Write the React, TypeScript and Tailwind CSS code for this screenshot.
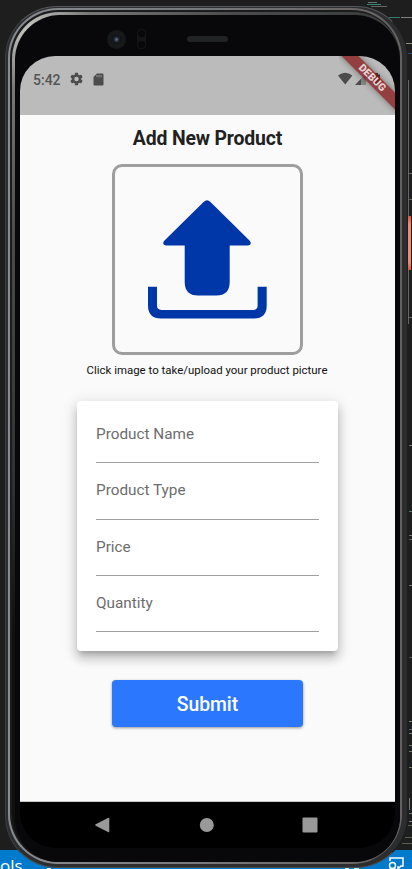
import React from "react";

const fields = ["Product Name", "Product Type", "Price", "Quantity"];

const codeMarks = [
  { top: 2, left: 368, width: 9, color: "#6f8f88" },
  { top: 4, left: 367, width: 14, color: "#3f9c86" },
  { top: 6, left: 371, width: 16, color: "#777777" },
  { top: 17, left: 389, width: 11, color: "#369682" },
  { top: 17, left: 401, width: 11, color: "#999999" },
  { top: 43, left: 404, width: 8, color: "#aaa88a" },
  { top: 53, left: 407, width: 5, color: "#295a8c" },
  { top: 173, left: 408, width: 4, color: "#777777" },
  { top: 199, left: 408, width: 4, color: "#77796a" },
  { top: 317, left: 408, width: 4, color: "#777777" },
  { top: 445, left: 409, width: 3, color: "#888888" },
  { top: 511, left: 409, width: 3, color: "#71877c" },
  { top: 535, left: 409, width: 3, color: "#888888" },
  { top: 539, left: 409, width: 3, color: "#777777" },
  { top: 585, left: 409, width: 3, color: "#888888" },
  { top: 657, left: 409, width: 3, color: "#66605c" },
  { top: 721, left: 409, width: 3, color: "#88917c" },
  { top: 729, left: 409, width: 3, color: "#777777" },
  { top: 733, left: 409, width: 3, color: "#88917c" },
  { top: 745, left: 409, width: 3, color: "#88917c" },
  { top: 751, left: 409, width: 3, color: "#88917c" },
  { top: 767, left: 409, width: 3, color: "#88917c" },
  { top: 813, left: 409, width: 3, color: "#88917c" },
  { top: 821, left: 409, width: 3, color: "#88917c" },
  { top: 825, left: 408, width: 4, color: "#66705c" },
  { top: 837, left: 405, width: 7, color: "#66705c" },
  { top: 843, left: 402, width: 10, color: "#66705c" },
];

function Editor() {
  return (
    <>
      {codeMarks.map((m, i) => (
        <div key={i} className="absolute h-px opacity-80" style={{ top: m.top, left: m.left, width: m.width, background: m.color }} />
      ))}
      <div className="absolute left-[408px] top-[80px] h-[244px] w-px bg-[#66676a]" />
      <div className="absolute left-[408px] top-[216px] h-[54px] w-[3px] bg-[linear-gradient(#d9573d,#f08a72_15%,#f08a72_85%,#d9573d)]" />
      <div className="absolute left-[409px] top-[798px] h-[12px] w-px bg-[#777]" />
      <div className="absolute bottom-0 left-0 h-[19px] w-full bg-[#007acc] text-white">
        <span className="absolute left-0 top-[8px] font-['Open_Sans',sans-serif] text-[17px] leading-[15px]">ols</span>
        <svg className="absolute left-[387px] top-[7px]" width="20" height="12" viewBox="0 0 20 12" fill="none" stroke="white" strokeWidth="1.500">
          <path d="M3 4V1h13v8h-2l-3 3V9" />
          <circle cx="5.500" cy="8.500" r="3" />
          <path d="M1.500 13q4-3 8 0" />
        </svg>
        <div className="absolute bottom-0 left-[345px] h-[2px] w-[4px] bg-white/80" />
        <div className="absolute bottom-0 left-[354px] h-[2px] w-[5px] bg-white/80" />
        <div className="absolute bottom-0 left-[47px] h-px w-[4px] bg-white/80" />
      </div>
    </>
  );
}

function StatusBar() {
  return (
    <div className="relative flex h-[59px] shrink-0 items-start bg-[#bbbbbb] pl-[13px] pt-[15px] text-[#555]">
      <span className="w-[28px] text-[14px] font-medium leading-[18px]">5:42</span>
      <svg className="ml-[8px]" width="15" height="16" viewBox="0 0 24 24" fill="#4c4c4c">
        <path d="M19.43 12.98c.04-.32.07-.64.07-.98s-.03-.66-.07-.98l2.11-1.65a.5.5 0 0 0 .12-.64l-2-3.46a.5.5 0 0 0-.61-.22l-2.49 1a7.3 7.3 0 0 0-1.69-.98l-.38-2.65A.49.49 0 0 0 14 2h-4a.49.49 0 0 0-.49.42l-.38 2.65c-.61.25-1.17.59-1.69.98l-2.49-1a.49.49 0 0 0-.61.22l-2 3.46a.49.49 0 0 0 .12.64l2.11 1.65c-.04.32-.07.65-.07.98s.03.66.07.98l-2.11 1.65a.5.5 0 0 0-.12.64l2 3.46c.12.22.39.3.61.22l2.49-1c.52.4 1.08.73 1.69.98l.38 2.65c.03.24.24.42.49.42h4c.25 0 .46-.18.49-.42l.38-2.65a7.3 7.3 0 0 0 1.69-.98l2.49 1c.23.09.49 0 .61-.22l2-3.46a.5.5 0 0 0-.12-.64zM12 15.5A3.5 3.5 0 1 1 12 8.500a3.5 3.500 0 0 1 0 7z" />
      </svg>
      <svg className="ml-[9px] mt-[2px]" width="11" height="13" viewBox="0 0 11 13">
        <path d="M4 .5h5.300q1.200 0 1.200 1.200v9.600q0 1.200-1.200 1.200H1.700Q.5 12.500.5 11.300V4z" fill="#4c4c4c" />
        <path d="M4 2v2.200M6 2v2.200M8 2v2.200" stroke="#999" strokeWidth="1" />
      </svg>
      <svg className="absolute left-[318px] top-[16px]" width="46" height="14" viewBox="0 0 46 14">
        <path d="M0 3.500Q7.200-1.800 14.400 3.500L7.200 12.500z" fill="#4c4c4c" />
        <path d="M17 13 23 6.800V13z" fill="#4c4c4c" />
        <path d="M23 6.800 28 2v11h-5z" fill="#888" />
        <path d="M35 2.500h2V1h3v1.500h2V13h-7z" fill="#3c3c3c" />
      </svg>
    </div>
  );
}

function DebugRibbon() {
  return (
    <div className="absolute right-0 top-0 h-[58px] w-[56px] overflow-hidden">
      <div className="absolute left-[-20px] top-[16px] flex h-[12px] w-[106px] rotate-45 items-center justify-center bg-[#851517]/75 text-[10.500px] font-black leading-none text-[#e3d2d3] shadow-[0_0_6px_rgba(0,0,0,0.4)]">
        DEBUG
      </div>
    </div>
  );
}

function UploadIcon() {
  return (
    <svg className="mr-[2px] shrink-0" width="184" height="184" viewBox="0 0 184 184" fill="#0037a8">
      <path d="M88.800 33.700Q92 30.700 95.200 33.700L135 73Q137.300 77 133 77.400H114.700V114Q114.700 127.500 101.200 127.500H83.200Q69.700 127.500 69.700 114V77.400H51Q46.700 77 49 73z" />
      <path d="M33 118.800H42V137.800Q42 141.900 46.400 141.900H138.200Q142.600 141.900 142.600 137.800V118.800H151.700V137.500Q151.700 150.500 138.700 150.500H46Q33 150.500 33 137.500z" />
    </svg>
  );
}

function ProductForm() {
  return (
    <main className="flex grow flex-col items-center bg-[#fafafa] text-[#212121]">
      <h1 className="mt-[10px] text-[19.400px] font-bold leading-[28px] tracking-[-0.15px]">Add New Product</h1>
      <button className="mt-[11px] flex h-[191px] w-[191px] items-center justify-center rounded-[10px] border-[3px] border-[#9e9e9e]">
        <UploadIcon />
      </button>
      <p className="mr-px mt-[7px] text-[11.450px] leading-[16px] text-[#111]">Click image to take/upload your product picture</p>
      <form className="mt-[23px] h-[250px] w-[261px] shrink-0 rounded-[4px] bg-white px-[19px] pt-[6px] shadow-[0_5px_5px_-3px_rgba(0,0,0,0.2),0_8px_10px_1px_rgba(0,0,0,0.14),0_3px_14px_2px_rgba(0,0,0,0.12)]">
        {fields.map((f) => (
          <label key={f} className="flex h-[56.300px] items-center border-b border-[#a0a0a0] text-[15.300px] text-[#6d6d6d]">
            {f}
          </label>
        ))}
      </form>
      <button className="mt-[29px] h-[47px] w-[191px] rounded-[4px] bg-[#2b78ff] pt-[3px] text-[19.300px] font-medium leading-[28px] text-white shadow-[0_1px_3px_rgba(0,0,0,0.4)]">
        Submit
      </button>
    </main>
  );
}

function NavBar() {
  return (
    <nav className="flex h-[47px] shrink-0 justify-center rounded-b-[35px] border-t border-[#c8c8c8] bg-black pt-[15px]">
      <svg className="mr-px" width="224" height="16" viewBox="0 0 224 16" fill="#999999">
        <path d="M12.900 .9Q14.300.2 14.300 1.500v13q0 1.200-1.300.5L.7 8.700q-1-.7 0-1.400z" />
        <circle cx="111.800" cy="8" r="7" />
        <rect x="207.500" y="0.500" width="15" height="15" rx="1" />
      </svg>
    </nav>
  );
}

export default function App() {
  return (
    <div className="relative h-[869px] w-[412px] overflow-hidden bg-[#1e1e1e] font-[Roboto,sans-serif]">
      <Editor />
      <div className="relative ml-[5px] h-full w-[403px] pt-[6px]">
        <div className="h-[862px] w-[403px] rounded-[52px] border border-b-[#4c4c4c] border-l-[#3c3d40] border-r-[#1d1e20] border-t-[#55565a] bg-[#2c2d2f] pb-[3px] pl-[2px] pr-[5px] pt-px">
          <div className="h-full rounded-[50px] bg-[linear-gradient(90deg,#8a8b90,#77787b_50%,#66615f)] pb-[2px] pl-[2px] pr-[2px] pt-[2px]">
            <div className="h-full rounded-[48px] bg-[#1b1c1e] pl-[2px] pt-[2px]">
              <div className="h-full rounded-[47px] bg-[radial-gradient(circle_at_20px_20px,#c8c8c4,#777777_60px,#4b4c4b_200px,#303132_450px,#101011_600px)] pl-[3px] pt-[3px]">
                <div className="relative flex h-full flex-col rounded-[45px] bg-[#08080a] pl-[5px] pt-[41px]">
                  <div className="absolute left-[92px] top-[15px] flex h-[19px] w-[19px] items-center justify-center rounded-full bg-[#17181a]">
                    <div className="h-[9px] w-[9px] rounded-full bg-[radial-gradient(circle,#687086_5%,#222938_35%,#090a0d_75%)]" />
                  </div>
                  <div className="absolute left-[122px] top-[14px] flex h-[20px] w-[9px] flex-col justify-between rounded-[4px] bg-[#141416] p-px">
                    <i className="h-[7px] w-[7px] rounded-full bg-[#08080a]" />
                    <i className="h-[7px] w-[7px] rounded-full bg-[#08080a]" />
                  </div>
                  <div className="absolute left-[172px] top-[21px] h-[6px] w-[41px] rounded-full bg-[#222325]" />
                  <div className="relative flex h-[792px] w-[375px] shrink-0 flex-col overflow-hidden rounded-[35px]">
                    <StatusBar />
                    <ProductForm />
                    <NavBar />
                    <DebugRibbon />
                  </div>
                </div>
              </div>
            </div>
          </div>
        </div>
      </div>
    </div>
  );
}
